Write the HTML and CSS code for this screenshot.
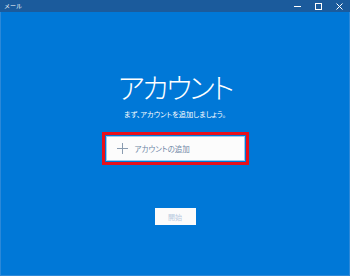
FILE: index.html
```html
<!DOCTYPE html>
<html lang="ja">
<head>
    <meta charset="UTF-8">
    <title>メール</title>
    <link rel="stylesheet" href="styles.css">
</head>
<body>
    <div class="window">
        <div class="titlebar">
            <span class="app-title">メール</span>
            <div class="win-controls">
                <span class="ctl">
                    <svg width="7" height="7" viewBox="0 0 7 7"><path d="M0 3.5H7" stroke="#fff" stroke-width="1"/></svg>
                </span>
                <span class="ctl">
                    <svg width="7" height="7" viewBox="0 0 7 7"><rect x="0.5" y="0.5" width="6" height="6" fill="none" stroke="#fff" stroke-width="1"/></svg>
                </span>
                <span class="ctl">
                    <svg width="7" height="7" viewBox="0 0 7 7"><path d="M0.5 0.5L6.5 6.5M6.5 0.5L0.5 6.5" stroke="#fff" stroke-width="1"/></svg>
                </span>
            </div>
        </div>

        <div class="content">
            <h1 class="heading">アカウント</h1>
            <p class="subtitle">まず、アカウントを追加しましょう。</p>

            <div class="highlight">
                <div class="add-account">
                    <svg class="plus" width="11" height="11" viewBox="0 0 11 11"><path d="M5.5 0V11M0 5.5H11" stroke="#8a9cb0" stroke-width="1"/></svg>
                    <span>アカウントの追加</span>
                </div>
            </div>

            <button class="start" disabled>開始</button>
        </div>
    </div>
</body>
</html>
```

FILE: styles.css
```css
body {
    margin: 0;
    font-family: "Noto Sans CJK JP", "Noto Sans", sans-serif;
}

.window {
    width: 350px;
    height: 276px;
    box-sizing: border-box;
    border: 1px solid #2b88d8;
    border-top: none;
    background-color: #0078d7;
    display: flex;
    flex-direction: column;
}

.titlebar {
    height: 12px;
    background-color: #1b5b9c;
    display: flex;
    align-items: center;
    justify-content: space-between;
    padding-left: 4px;
    margin: 0 -1px;
}

.app-title {
    color: #fff;
    font-size: 6px;
    line-height: 1;
}

.win-controls {
    display: flex;
    height: 12px;
}

.win-controls .ctl {
    width: 21px;
    display: flex;
    align-items: center;
    justify-content: center;
}

.content {
    flex: 1;
    display: flex;
    flex-direction: column;
    align-items: center;
}

.heading {
    margin: 58px 0 0;
    color: #fff;
    font-size: 28.5px;
    font-weight: 200;
    line-height: 34px;
    letter-spacing: -2.4px;
    font-feature-settings: "palt";
}

.subtitle {
    margin: 5px 0 0;
    color: #fff;
    font-size: 7.2px;
    line-height: 10px;
    font-feature-settings: "palt";
}

.highlight {
    margin-top: 13px;
    width: 147px;
    height: 33px;
    box-sizing: border-box;
    border: 3px solid #e8101c;
    padding: 1px;
}

.add-account {
    height: 100%;
    box-sizing: border-box;
    background-color: #fcfcfc;
    border: 1px solid #9ec8ee;
    display: flex;
    align-items: center;
    padding-left: 10px;
    gap: 7px;
    color: #6f87a6;
    font-size: 7.5px;
    font-feature-settings: "palt";
}

.start {
    margin-top: 43px;
    width: 41px;
    height: 17px;
    border: none;
    background-color: #fbfbfb;
    color: #b9c9de;
    font-family: inherit;
    font-size: 7px;
    padding: 0;
}
```
